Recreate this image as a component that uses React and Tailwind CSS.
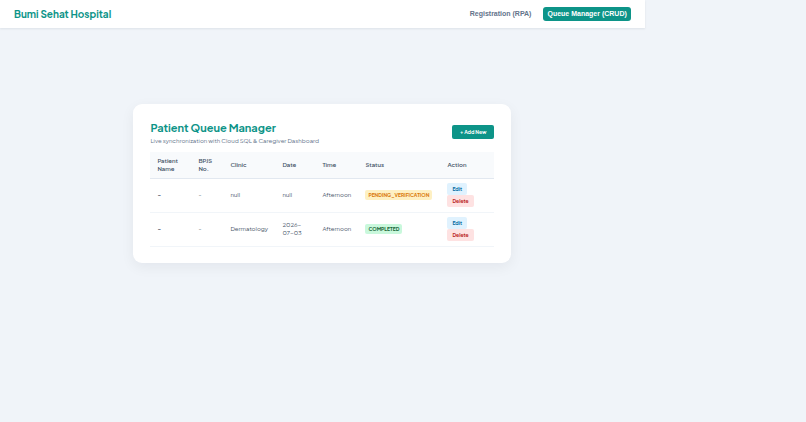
import React from "react";

const COLUMNS = [
  { label: "Patient Name", width: "w-[41px]" },
  { label: "BPJS No.", width: "w-[32px]" },
  { label: "Clinic", width: "w-[52px]" },
  { label: "Date", width: "w-[40px]" },
  { label: "Time", width: "w-[43px]" },
  { label: "Status", width: "w-[82px]" },
  { label: "Action", width: "w-auto" },
];

const STATUS_STYLES = {
  PENDING_VERIFICATION: "bg-[#fef0c3] text-[#d97706]",
  COMPLETED: "bg-[#c9f8dc] text-[#166534]",
};

const QUEUE = [
  { id: 1, name: "-", bpjs: "-", clinic: "null", date: "null", time: "Afternoon", status: "PENDING_VERIFICATION" },
  { id: 2, name: "-", bpjs: "-", clinic: "Dermatology", date: "2026-07-03", time: "Afternoon", status: "COMPLETED" },
];

const Navbar = () => (
  <header className="flex h-7 items-center justify-between bg-white px-3.5 shadow-[0_1px_2px_rgba(15,23,42,0.08)]">
    <span className="text-[10px] font-bold text-[#0d9488]">Bumi Sehat Hospital</span>
    <nav className="flex items-center gap-2 font-['Liberation_Sans',sans-serif] text-[7px] leading-[14px] font-bold">
      <a href="#registration" className="rounded-[3px] px-1 text-[#64748b]">
        Registration (RPA)
      </a>
      <a href="#queue" className="rounded-[3px] bg-[#0d9488] px-1 text-white">
        Queue Manager (CRUD)
      </a>
    </nav>
  </header>
);

const QueueRow = ({ patient }) => (
  <tr className="h-[34px] border-b border-[#f1f5f9]">
    <td className="px-[7px] font-bold text-[#334155]">{patient.name}</td>
    <td className="px-[7px]">{patient.bpjs}</td>
    <td className="px-[7px]">{patient.clinic}</td>
    <td className="px-[7px]">{patient.date}</td>
    <td className="px-[7px]">{patient.time}</td>
    <td className="px-[7px]">
      <span className={`inline-block rounded-[2px] px-[3px] align-middle text-[5px] leading-[10px] font-bold whitespace-nowrap ${STATUS_STYLES[patient.status]}`}>
        {patient.status}
      </span>
    </td>
    <td className="px-[7px]">
      <div className="flex flex-col items-start text-[5px] leading-[12px] font-bold">
        <button type="button" className="rounded-[2px] bg-[#e0f2fe] px-[5px] text-[#0369a1]">
          Edit
        </button>
        <button type="button" className="rounded-[2px] bg-[#fee2e2] px-[5px] text-[#b91c1c]">
          Delete
        </button>
      </div>
    </td>
  </tr>
);

const QueueManager = () => (
  <section className="rounded-[9px] bg-white px-[17px] pt-[17px] pb-4 shadow-[0_4px_14px_rgba(15,23,42,0.06)]">
    <div className="mb-1.5 flex items-start justify-between">
      <div>
        <h1 className="text-[11px] leading-[14px] font-bold text-[#0d9488]">Patient Queue Manager</h1>
        <p className="text-[6px] leading-[11px] text-[#64748b]">
          Live synchronization with Cloud SQL &amp; Caregiver Dashboard
        </p>
      </div>
      <button type="button" className="mt-1 rounded-[2px] bg-[#0d9488] px-2 text-[5px] leading-[14px] font-bold text-white">
        + Add New
      </button>
    </div>
    <table className="w-full table-fixed border-collapse text-left text-[6px] leading-[8px] text-[#475569]">
      <thead>
        <tr className="h-[26px] border-b border-[#e2e8f0] bg-[#f8fafc]">
          {COLUMNS.map((column) => (
            <th key={column.label} scope="col" className={`px-[7px] font-semibold text-[#475569] ${column.width}`}>
              {column.label}
            </th>
          ))}
        </tr>
      </thead>
      <tbody>
        {QUEUE.map((patient) => (
          <QueueRow key={patient.id} patient={patient} />
        ))}
      </tbody>
    </table>
  </section>
);

const App = () => (
  <div className="min-h-screen bg-[#f0f4f9] font-['Plus_Jakarta_Sans',Inter,sans-serif]">
    <div className="w-4/5">
      <Navbar />
      <main className="mx-auto max-w-[378px] pt-[76px]">
        <QueueManager />
      </main>
    </div>
  </div>
);

export default App;
